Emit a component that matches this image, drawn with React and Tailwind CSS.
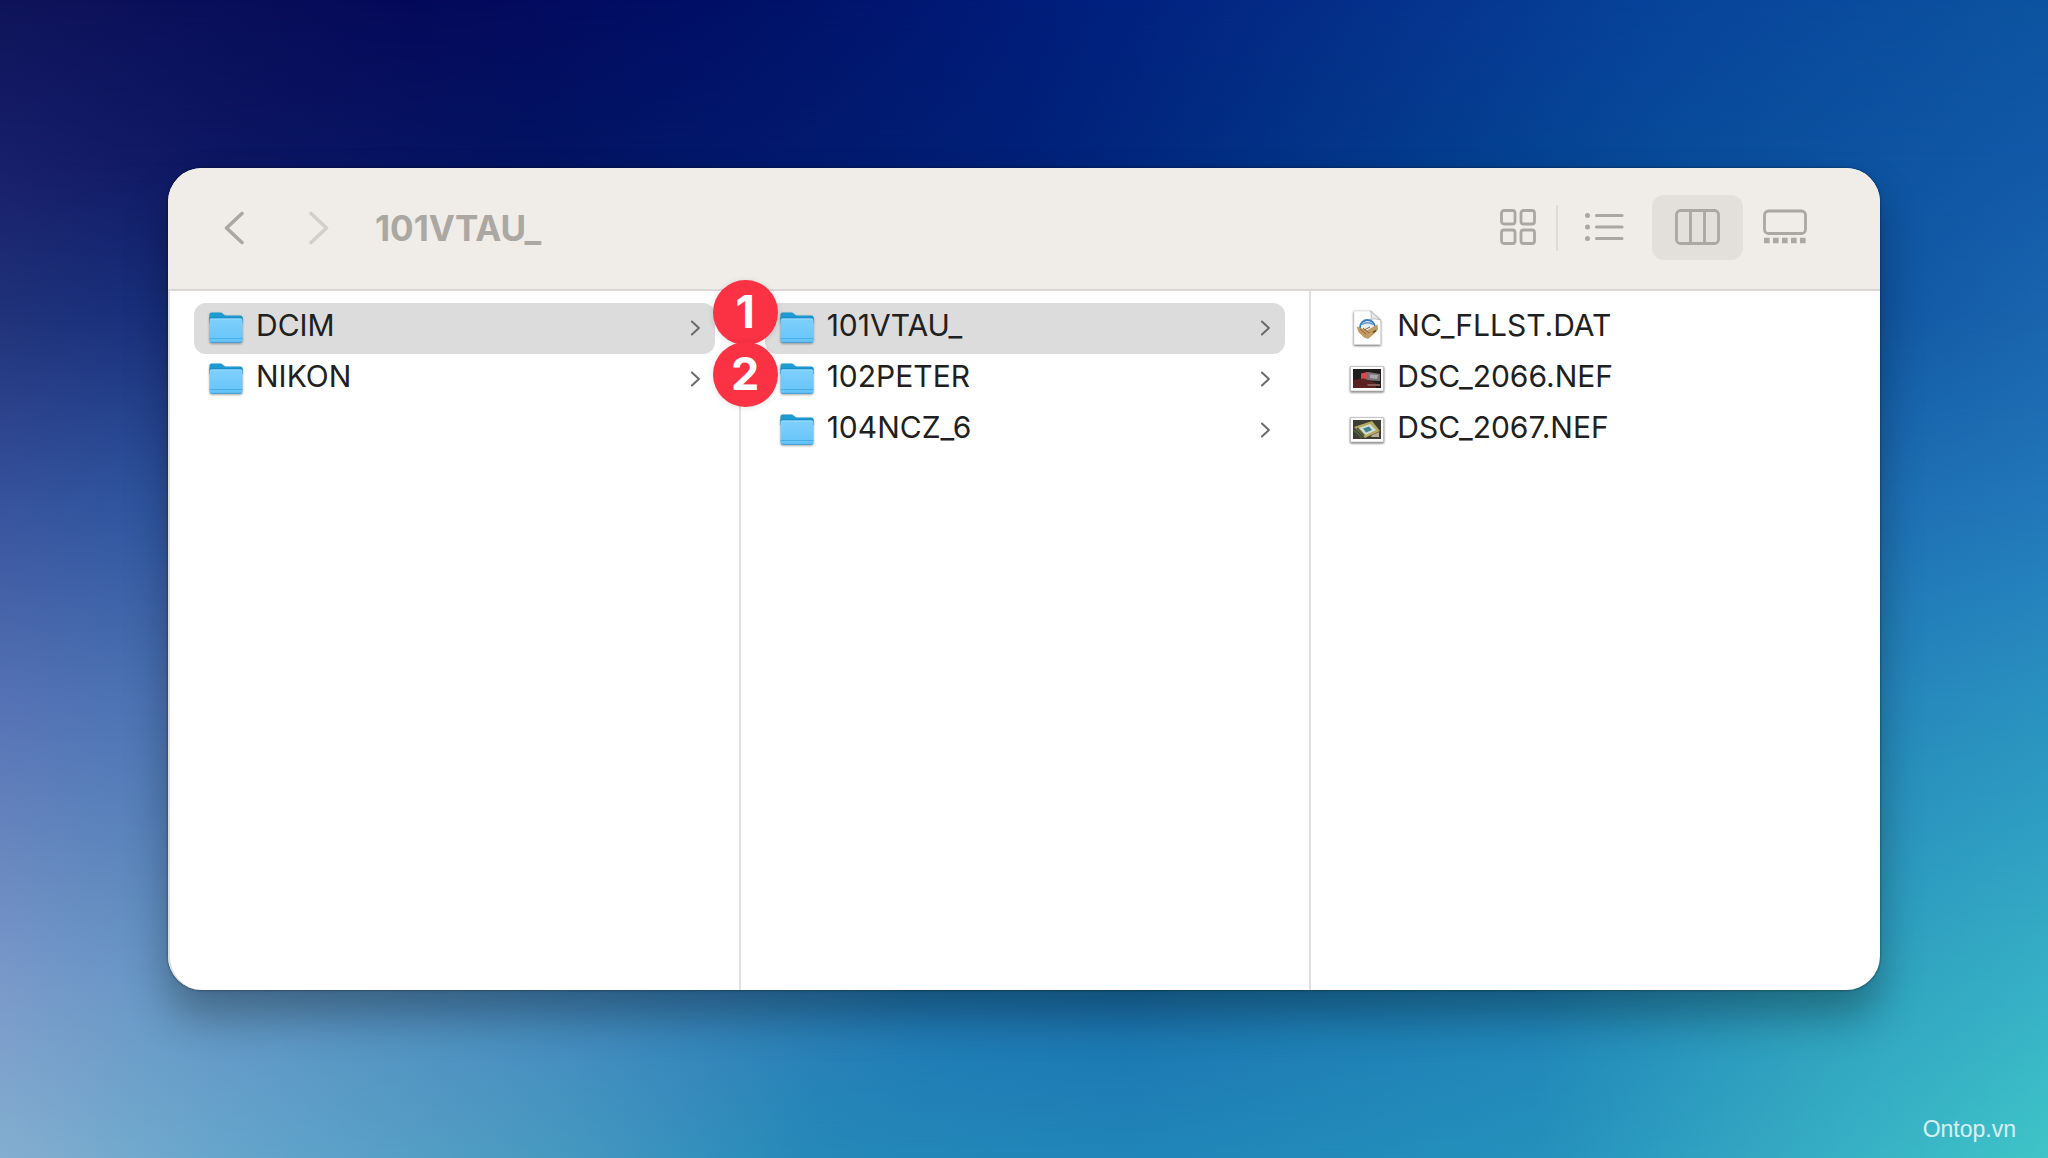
import { useState } from "react";
import clsx from "clsx";

// Wallpaper: horizontal gradients, each one fading in over the one above it
const wallpaper = [
  "bg-[linear-gradient(to_right,#0f1459_0%,#05095a_20%,#000f66_35%,#001e7c_52%,#052e88_65%,#07429a_80%,#0c54a0_100%)]",
  "bg-[linear-gradient(to_right,#181f6a_0%,#0b1662_12%,#031362_26%,#002078_50%,#033a8c_68%,#084c9a_82%,#125aa8_100%)] [mask-image:linear-gradient(to_bottom,transparent_0%,black_14%)]",
  "bg-[linear-gradient(to_right,#20327a_0%,#182f7c_8%,#0a2a80_50%,#1258a4_92%,#1a64ae_100%)] [mask-image:linear-gradient(to_bottom,transparent_14%,black_27%)]",
  "bg-[linear-gradient(to_right,#38549e_0%,#2f56a0_8%,#1a4a98_50%,#1e70b4_92%,#2278ba_100%)] [mask-image:linear-gradient(to_bottom,transparent_27%,black_44%)]",
  "bg-[linear-gradient(to_right,#5673b5_0%,#4c74b4_8%,#1f60a8_50%,#2688bc_92%,#2a92c0_100%)] [mask-image:linear-gradient(to_bottom,transparent_44%,black_61%)]",
  "bg-[linear-gradient(to_right,#7b9bca_0%,#6799c6_8%,#4a8cc0_25%,#2078b4_45%,#1b74b0_55%,#2084b8_75%,#2e9fbe_88%,#37b2c6_100%)] [mask-image:linear-gradient(to_bottom,transparent_61%,black_86%)]",
  "bg-[linear-gradient(to_right,#84aed0_0%,#68a6cc_10%,#4598c0_28%,#2488b8_40%,#2085b8_55%,#2590bc_75%,#33a5c2_85%,#3fc4c8_100%)] [mask-image:linear-gradient(to_bottom,transparent_86%,black_100%)]",
];

const columns = [
  {
    label: "NIKON D850",
    items: [
      { name: "DCIM", kind: "folder" },
      { name: "NIKON", kind: "folder" },
    ],
  },
  {
    label: "DCIM",
    badges: true,
    items: [
      { name: "101VTAU_", kind: "folder" },
      { name: "102PETER", kind: "folder" },
      { name: "104NCZ_6", kind: "folder" },
    ],
  },
  {
    label: "101VTAU_",
    items: [
      { name: "NC_FLLST.DAT", kind: "data" },
      { name: "DSC_2066.NEF", kind: "car" },
      { name: "DSC_2067.NEF", kind: "desk" },
    ],
  },
];

function Chevron({ className, flip, width = 3.6 }) {
  return (
    <svg viewBox="0 0 20 34" className={className} fill="none" stroke="currentColor" strokeWidth={width} strokeLinecap="round" strokeLinejoin="round">
      <path d={flip ? "M18 2.500 2.500 17 18 31.500" : "M2 2.500 17.500 17 2 31.500"} />
    </svg>
  );
}

function FolderIcon() {
  return (
    <svg viewBox="0 0 34 34" className="h-[34px] w-[34px] drop-shadow-[0_1px_1px_rgba(0,0,0,0.35)]">
      <defs>
        <linearGradient id="folderFront" x1="0" y1="0" x2="0" y2="1">
          <stop offset="0" stopColor="#7fd0fb" />
          <stop offset="1" stopColor="#66c4f9" />
        </linearGradient>
      </defs>
      <path d="M.500 3.500a2 2 0 0 1 2-2h8.500c1.200 0 2 .4 2.800 1.200l1 .9c.6.600 1.200.9 2.200.9h14.500a2 2 0 0 1 2 2V12H.500z" fill="#1e9bd0" />
      <path d="M.500 6.500h33V12H.500z" fill="#1781c0" />
      <path d="M.500 9.300a1.800 1.800 0 0 1 1.800-1.800h29.400a1.800 1.800 0 0 1 1.800 1.800v20.200a2 2 0 0 1-2 2h-29a2 2 0 0 1-2-2z" fill="url(#folderFront)" />
      <path d="M1 8.700c.3-.5.800-.7 1.300-.7h29.400c.5 0 1 .2 1.300.7" fill="none" stroke="#98ddff" strokeWidth="1" />
      <path d="M.500 27.500h33" stroke="#48aee6" strokeWidth="1" />
      <path d="M1 30.500c.4.600 1 .8 1.600.8h28.800c.7 0 1.200-.2 1.600-.8" fill="none" stroke="#3f9fd6" strokeWidth="1" />
    </svg>
  );
}

function DataIcon() {
  return (
    <svg viewBox="0 0 34 36" className="h-9 w-[34px] drop-shadow-[0_1px_1px_rgba(0,0,0,0.6)]">
      <path d="M4 1h16.500L30.500 10v24.500H4z" fill="#fefefe" stroke="#e0e0e0" strokeWidth=".7" />
      <path d="M20.500 1c1.200 3.500 1 6 .2 8.300 3.300-.7 6.500-.5 9.800.7z" fill="#e9e9e9" stroke="#a5a5a5" strokeWidth=".7" />
      <circle cx="17.500" cy="17.500" r="7.500" fill="#e6eef6" stroke="#3c78b4" strokeWidth="1.800" />
      <path d="M12 14.500c3-2.500 8-2.500 11 0" fill="none" stroke="#5b9bd0" strokeWidth="1.500" />
      <path d="M6.500 16.500l5 1.700 5.500 2.300 6-3.500 4.500-2.500.5 5-3.500 4-6.500 5.500-4-1.500-5.500-5.500z" fill="#c39a62" />
      <path d="M10 19l6 5m-3-6 6 5m1-6-6 3" fill="none" stroke="#8a6636" strokeWidth="1" />
      <path d="M23 22.500l3-2" stroke="#4c4030" strokeWidth="1.500" />
    </svg>
  );
}

function PhotoIcon({ kind }) {
  return (
    <svg viewBox="0 0 34 26" className="h-[26px] w-[34px] drop-shadow-[0_1px_1px_rgba(0,0,0,0.6)]">
      <path d="M.500.500h33v24.500H.500z" fill="#fff" stroke="#bdbdbd" strokeWidth=".8" />
      {kind === "car" ? (
        <>
          <path d="M3 3h28v19H3z" fill="#221b1b" />
          <path d="M11 8l7-2 12 2v7l-19-1z" fill="#77767a" />
          <path d="M11 7.500l6.500-1.500.5 7-7 1z" fill="#d8474d" />
          <path d="M20 8.500l8 .5-1 4-7-1z" fill="#a9a9ad" />
          <path d="M3 14l11-1.500 12 4.500v5H3z" fill="#5a2022" />
          <path d="M17 18h13v2H18z" fill="#8a5a52" />
        </>
      ) : (
        <>
          <path d="M3 3h28v19H3z" fill="#3e3c34" />
          <path d="M4 10l18-6 8 10-15 7z" fill="#b3ab5e" />
          <path d="M9 11l11-4 6 6-10 5z" fill="#d5dbd6" />
          <path d="M13 11.500l6-2 3 3.500-6 2.500z" fill="#3c8590" />
          <path d="M4 13l8 8M7 11l7 8" stroke="#4f5f40" strokeWidth="2" />
          <path d="M22 18l7-3v5h-8z" fill="#b9ad97" />
        </>
      )}
    </svg>
  );
}

function GridIcon() {
  return (
    <svg viewBox="0 0 36 36" className="size-9" fill="none" stroke="currentColor" strokeWidth="2.800">
      <rect x="1.500" y="1.500" width="13.500" height="13.500" rx="2.500" />
      <rect x="21" y="1.500" width="13.500" height="13.500" rx="2.500" />
      <rect x="1.500" y="21" width="13.500" height="13.500" rx="2.500" />
      <rect x="21" y="21" width="13.500" height="13.500" rx="2.500" />
    </svg>
  );
}

function ListIcon() {
  return (
    <svg viewBox="0 0 40 36" className="h-9 w-10" fill="none" stroke="currentColor" strokeWidth="3.200" strokeLinecap="round">
      <path d="M12.500 6.500h25.500M12.500 18h25.500M12.500 29.500h25.500" />
      <path d="M3.500 6.500h.01M3.500 18h.01M3.500 29.500h.01" strokeWidth="5" />
    </svg>
  );
}

function ColumnsIcon() {
  return (
    <svg viewBox="0 0 45 36" className="h-9 w-[45px]" fill="none" stroke="currentColor" strokeWidth="2.800">
      <rect x="1.500" y="1.500" width="42" height="33" rx="4" />
      <path d="M15.500 2v32M29.500 2v32" />
    </svg>
  );
}

function GalleryIcon() {
  return (
    <svg viewBox="0 0 45 36" className="h-9 w-[45px]" fill="none" stroke="currentColor" strokeWidth="2.800">
      <rect x="1.500" y="2" width="41" height="22.500" rx="4" />
      <path d="M1 31.500h42" strokeWidth="5.500" strokeDasharray="5.600 3.400" />
    </svg>
  );
}

function FileIcon({ kind }) {
  if (kind === "folder") return <FolderIcon />;
  if (kind === "data") return <DataIcon />;
  return <PhotoIcon kind={kind} />;
}

function Row({ item, selected, onSelect }) {
  return (
    <li>
      <button
        onClick={onSelect}
        className={clsx("flex h-[51px] w-full items-center gap-[13px] rounded-xl px-[15px] pb-0.5 text-left", selected && "bg-[#dcdcdc]")}
      >
        <FileIcon kind={item.kind} />
        <span className="flex-1 pb-1.5 text-[30px] leading-9 text-[#202020]">{item.name}</span>
        {item.kind === "folder" && <Chevron className="h-4 w-[9px] text-[#6b6b6b]" width={4.5} />}
      </button>
    </li>
  );
}

function Badge({ className, children }) {
  return (
    <span
      className={clsx(
        "absolute -left-7 flex size-[65px] items-center justify-center rounded-full bg-[#fb3144] pb-0.5 text-[45px] leading-none font-bold text-white shadow-[0_1px_6px_rgba(0,0,0,0.12)]",
        className
      )}
    >
      {children}
    </span>
  );
}

export default function App() {
  const [selected, setSelected] = useState(["DCIM", "101VTAU_", null]);
  const [view, setView] = useState("columns");

  const select = (index, name) => {
    setSelected(prev => prev.map((x, i) => (i === index ? name : x)));
  };

  return (
    <div className="relative isolate flex min-h-screen p-42 font-['Inter',sans-serif]">
      {/* Wallpaper */}
      <div className="absolute inset-0 -z-10">
        {wallpaper.map((layer, i) => (
          <div key={i} className={clsx("absolute inset-0", layer)} />
        ))}
      </div>

      {/* Window */}
      <main className="flex flex-1 flex-col rounded-[34px] bg-white shadow-[0_0_2px_1px_rgba(0,0,0,0.25),0_26px_44px_rgba(0,0,0,0.32)]">
        <header className="flex h-[123px] items-center rounded-t-[34px] border-b-2 border-[#dbd9d6] bg-[#f0ede8] pr-[52px] pb-0.5 pl-14 text-[#aba7a3]">
          <button aria-label="Back">
            <Chevron className="h-[34px] w-5" flip />
          </button>
          <button aria-label="Forward" disabled className="ml-[65px] text-[#d2cfcb]">
            <Chevron className="h-[34px] w-5" />
          </button>
          <h1 className="ml-[46px] flex-1 text-[35px] leading-10 font-bold">101VTAU_</h1>

          <div className="flex items-center">
            <button aria-label="Icons" onClick={() => setView("icons")} className={clsx("flex h-[65px] items-center rounded-xl px-5 pb-0.5", view === "icons" && "bg-[#e3e0db]")}>
              <GridIcon />
            </button>
            <div className="h-[46px] w-0.5 bg-[#dfdcd8]" />
            <button aria-label="List" onClick={() => setView("list")} className={clsx("ml-0.5 flex h-[65px] items-center rounded-xl px-6 pb-0.5", view === "list" && "bg-[#e3e0db]")}>
              <ListIcon />
            </button>
            <button aria-label="Columns" onClick={() => setView("columns")} className={clsx("ml-1 flex h-[65px] items-center rounded-xl px-[23px] pb-0.5", view === "columns" && "bg-[#e3e0db]")}>
              <ColumnsIcon />
            </button>
            <button aria-label="Gallery" onClick={() => setView("gallery")} className={clsx("flex h-[65px] items-center rounded-xl px-5 pb-0.5", view === "gallery" && "bg-[#e3e0db]")}>
              <GalleryIcon />
            </button>
          </div>
        </header>

        {/* Columns */}
        <div className="grid flex-1 grid-cols-3">
          {columns.map((column, index) => (
            <section key={column.label} aria-label={column.label} className="relative border-l-2 border-[#e0e0e0] px-6 pt-3 first:rounded-bl-[34px]">
              <ul>
                {column.items.map(item => (
                  <Row
                    key={item.name}
                    item={item}
                    selected={selected[index] === item.name}
                    onSelect={() => select(index, item.name)}
                  />
                ))}
              </ul>
              {column.badges && (
                <>
                  <Badge className="-top-[11px]">1</Badge>
                  <Badge className="top-[51px]">2</Badge>
                </>
              )}
            </section>
          ))}
        </div>
      </main>

      <a href="#" className="absolute right-8 bottom-[17px] font-['Liberation_Sans',sans-serif] text-[23px] leading-6 text-white/80">
        Ontop.vn
      </a>
    </div>
  );
}
